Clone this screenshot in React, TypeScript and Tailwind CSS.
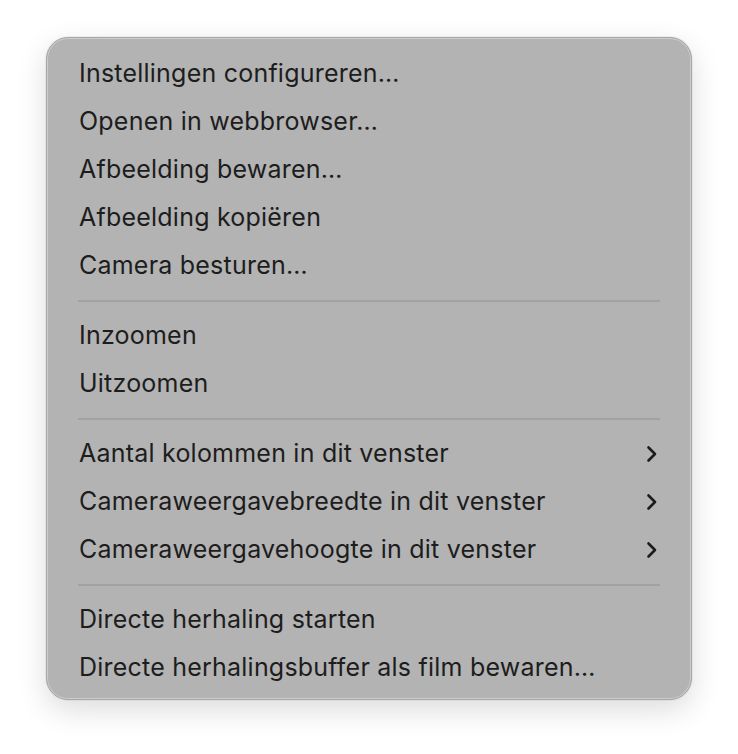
import React from "react";

type Item = { label: string; sub?: boolean } | "sep";

const items: Item[] = [
  { label: "Instellingen configureren…" },
  { label: "Openen in webbrowser…" },
  { label: "Afbeelding bewaren…" },
  { label: "Afbeelding kopiëren" },
  { label: "Camera besturen…" },
  "sep",
  { label: "Inzoomen" },
  { label: "Uitzoomen" },
  "sep",
  { label: "Aantal kolommen in dit venster", sub: true },
  { label: "Cameraweergavebreedte in dit venster", sub: true },
  { label: "Cameraweergavehoogte in dit venster", sub: true },
  "sep",
  { label: "Directe herhaling starten" },
  { label: "Directe herhalingsbuffer als film bewaren…" },
];

function Chevron() {
  return (
    <svg width="14" height="18" viewBox="0 0 14 18" fill="none">
      <path d="M3.5 2.5 L10 9 L3.5 15.5" stroke="#1c1c1c" strokeWidth="2.6" strokeLinecap="round" strokeLinejoin="round" />
    </svg>
  );
}

export default function App() {
  return (
    <div className="w-[738px] h-[754px] bg-white pl-[46px] pt-[37px]" style={{ fontFamily: "Inter, 'Noto Sans', sans-serif" }}>
      <div className="w-[646px] h-[663px] rounded-[22px] bg-[#b3b3b3] border border-[#a6a6a6] shadow-[0_10px_30px_rgba(0,0,0,0.14),0_0_0_1px_rgba(0,0,0,0.04),inset_0_0_0_1px_rgba(255,255,255,0.35)] pt-[12px] pb-[7px]">
        <div className="h-full">
          {items.map((it, i) =>
            it === "sep" ? (
              <div key={i} className="h-[22px] flex items-center px-[31px]">
                <div className="h-[2px] w-full bg-[#a2a2a2]" />
              </div>
            ) : (
              <div key={i} className="h-[48px] flex items-center justify-between pl-[32px] pr-[32px] text-[25px] tracking-[0.22px] text-[#1d1d1d]">
                <span>{it.label}</span>
                {it.sub ? <Chevron /> : null}
              </div>
            )
          )}
        </div>
      </div>
    </div>
  );
}
